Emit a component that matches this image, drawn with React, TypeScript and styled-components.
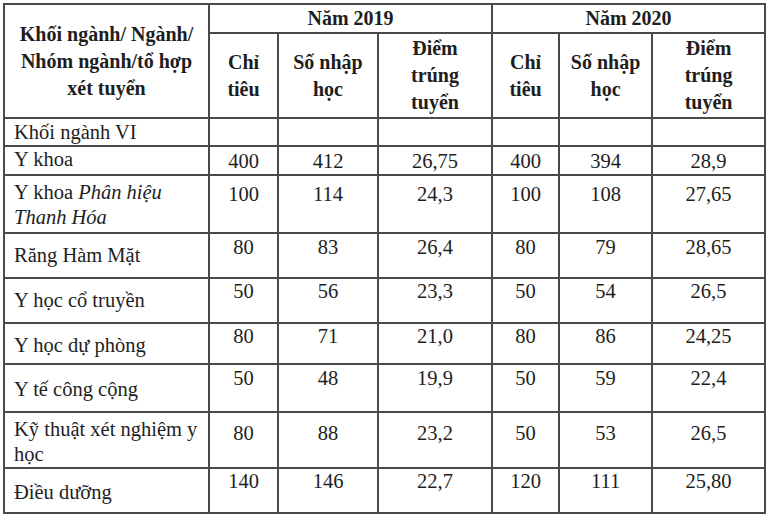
import React from "react";
import styled, { createGlobalStyle } from "styled-components";

const GlobalStyle = createGlobalStyle`
  html, body { margin: 0; padding: 0; background: #ffffff; }
  body { font-family: "Liberation Serif", "Times New Roman", serif; color: #1e1e1e; }
`;

const Page = styled.div`
  padding: 3px 0 0 3px;
`;

const Table = styled.table`
  border-collapse: collapse;
  table-layout: fixed;
  width: 763px;
  font-family: "Liberation Serif", "Times New Roman", serif;
`;

const Col = styled.col<{ $w: number }>`
  width: ${(p) => p.$w}px;
`;

const Row = styled.tr<{ $h: number }>`
  height: ${(p) => p.$h}px;
`;

const HeadCell = styled.th`
  border: 2px solid #4a4a4a;
  padding: 0;
  font-size: 20px;
  line-height: 27px;
  font-weight: bold;
  text-align: center;
  vertical-align: middle;
  color: #1e1e1e;
`;

const LabelCell = styled.td<{ $pad: number }>`
  border: 2px solid #4a4a4a;
  padding: ${(p) => p.$pad}px 2px 0 9px;
  font-size: 20.5px;
  line-height: 25px;
  text-align: left;
  vertical-align: top;
  white-space: nowrap;
`;

const NumCell = styled.td<{ $pad: number }>`
  border: 2px solid #4a4a4a;
  padding: ${(p) => p.$pad}px 0 0 0;
  font-size: 20.5px;
  line-height: 25px;
  text-align: center;
  vertical-align: top;
`;

const Note = styled.i`
  font-style: italic;
`;

type DataRow = {
  label: React.ReactNode;
  values: string[];
  h: number;
  lp: number;
  np: number;
};

const rows: DataRow[] = [
  { label: "Khối ngành VI", values: ["", "", "", "", "", ""], h: 28, lp: 1, np: 0 },
  { label: "Y khoa", values: ["400", "412", "26,75", "400", "394", "28,9"], h: 29, lp: 0, np: 2 },
  {
    label: (
      <>
        Y khoa <Note>Phân hiệu</Note>
        <br />
        <Note>Thanh Hóa</Note>
      </>
    ),
    values: ["100", "114", "24,3", "100", "108", "27,65"],
    h: 58,
    lp: 4,
    np: 6,
  },
  { label: "Răng Hàm Mặt", values: ["80", "83", "26,4", "80", "79", "28,65"], h: 45, lp: 9, np: 1 },
  { label: "Y học cổ truyền", values: ["50", "56", "23,3", "50", "54", "26,5"], h: 45, lp: 9, np: 0 },
  { label: "Y học dự phòng", values: ["80", "71", "21,0", "80", "86", "24,25"], h: 41, lp: 9, np: 0 },
  { label: "Y tế công cộng", values: ["50", "48", "19,9", "50", "59", "22,4"], h: 48, lp: 12, np: 1 },
  {
    label: (
      <>
        Kỹ thuật xét nghiệm y
        <br />
        học
      </>
    ),
    values: ["80", "88", "23,2", "50", "53", "26,5"],
    h: 56,
    lp: 4,
    np: 8,
  },
  { label: "Điều dưỡng", values: ["140", "146", "22,7", "120", "111", "25,80"], h: 45, lp: 11, np: 0 },
];

const widths = [205, 69, 100, 114, 67, 93, 113];

export default function App() {
  return (
    <>
      <GlobalStyle />
      <Page>
        <Table>
          <colgroup>
            {widths.map((w, i) => (
              <Col key={i} $w={w} />
            ))}
          </colgroup>
          <thead>
            <Row $h={28}>
              <HeadCell rowSpan={2}>
                Khối ngành/ Ngành/
                <br />
                Nhóm ngành/tổ hợp
                <br />
                xét tuyển
              </HeadCell>
              <HeadCell colSpan={3}>Năm 2019</HeadCell>
              <HeadCell colSpan={3}>Năm 2020</HeadCell>
            </Row>
            <Row $h={85}>
              <HeadCell>
                Chỉ
                <br />
                tiêu
              </HeadCell>
              <HeadCell>
                Số nhập
                <br />
                học
              </HeadCell>
              <HeadCell>
                Điểm
                <br />
                trúng
                <br />
                tuyển
              </HeadCell>
              <HeadCell>
                Chỉ
                <br />
                tiêu
              </HeadCell>
              <HeadCell>
                Số nhập
                <br />
                học
              </HeadCell>
              <HeadCell>
                Điểm
                <br />
                trúng
                <br />
                tuyển
              </HeadCell>
            </Row>
          </thead>
          <tbody>
            {rows.map((r, i) => (
              <Row key={i} $h={r.h}>
                <LabelCell $pad={r.lp}>{r.label}</LabelCell>
                {r.values.map((v, j) => (
                  <NumCell key={j} $pad={r.np}>
                    {v}
                  </NumCell>
                ))}
              </Row>
            ))}
          </tbody>
        </Table>
      </Page>
    </>
  );
}
